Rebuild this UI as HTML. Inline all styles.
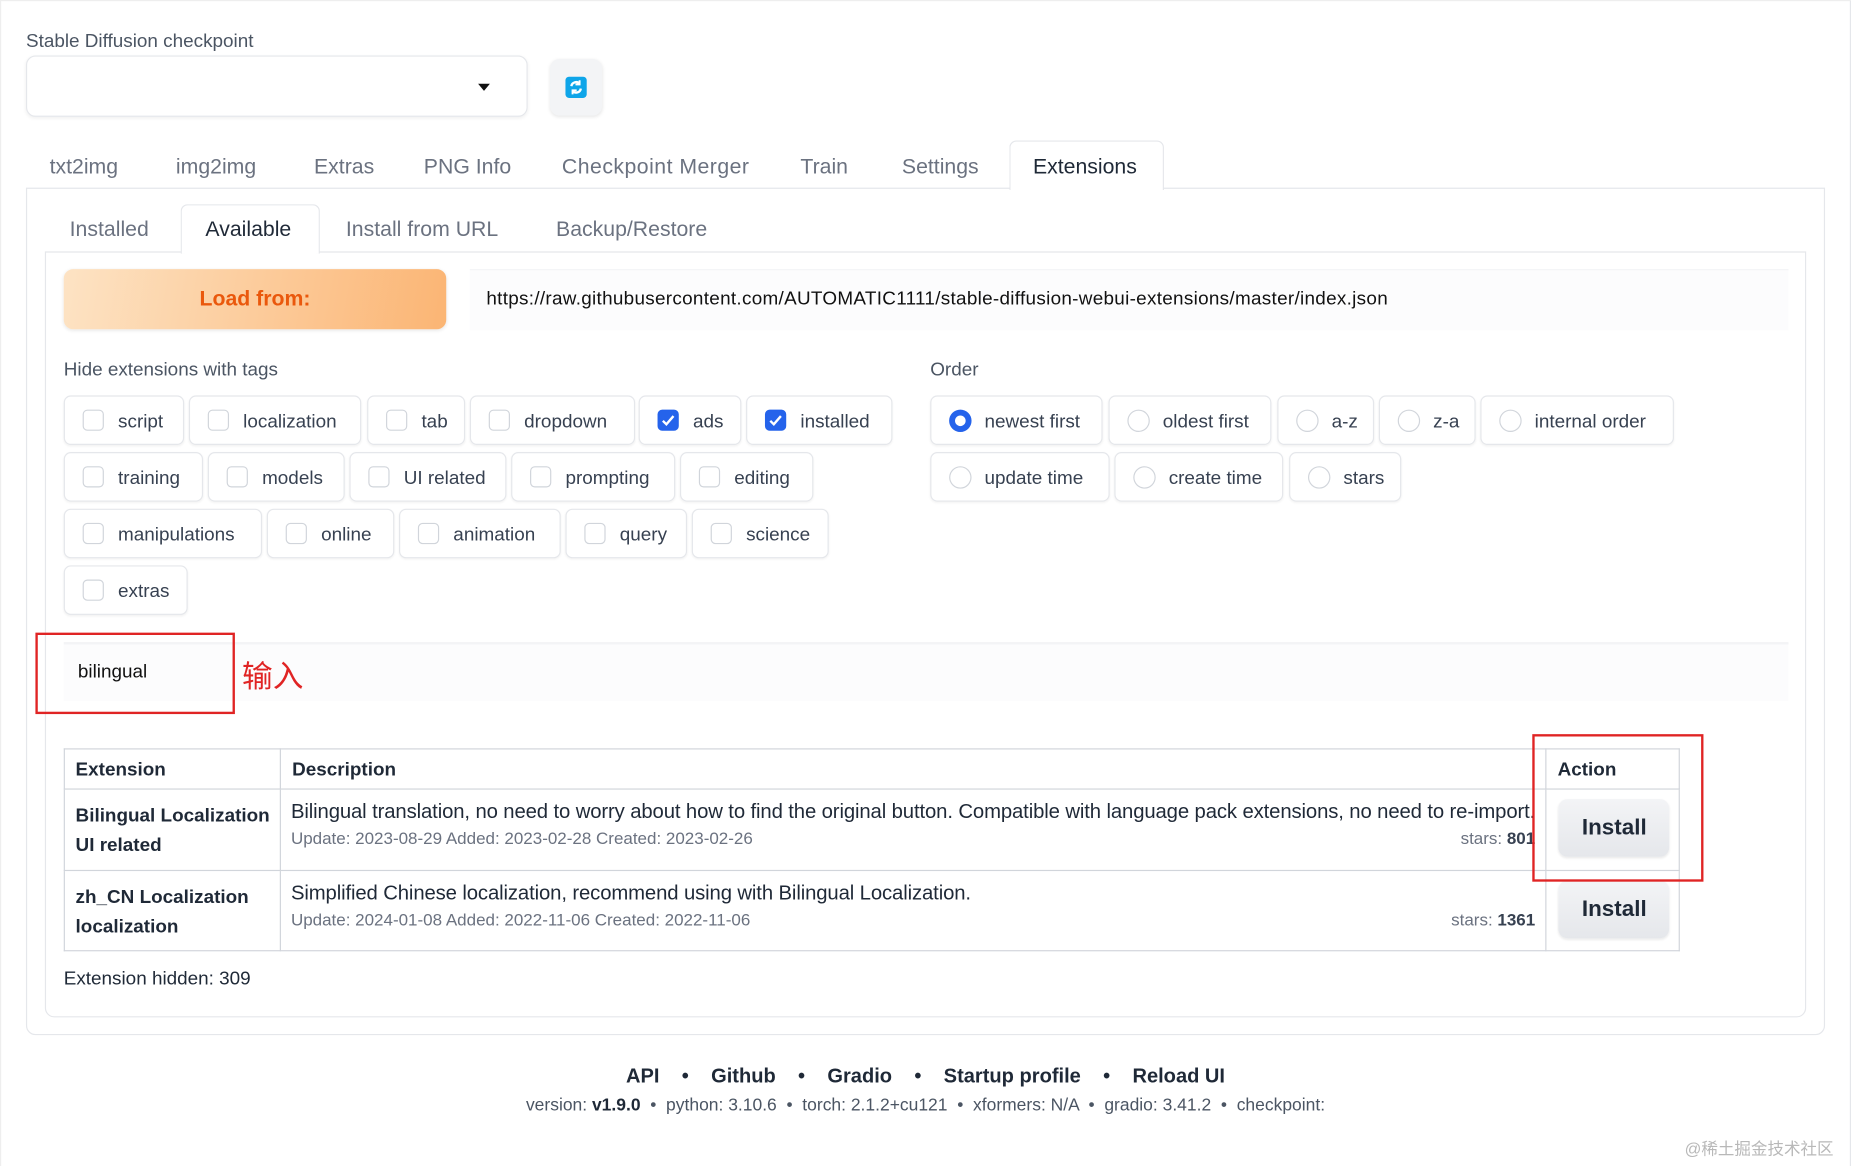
<!DOCTYPE html>
<html><head><meta charset="utf-8">
<style>
html,body{margin:0;padding:0;background:#fff;overflow:hidden;width:1851px;height:1165px}
#s{position:absolute;left:0;top:0;width:1568px;height:987px;transform:scale(1.1805,1.1803);transform-origin:0 0;font-family:"Liberation Sans","Noto Sans CJK SC",sans-serif;color:#1f2937}
.a{position:absolute;white-space:nowrap}
.t{font-size:18px;color:#6b7280;top:131px}
.st{font-size:18px;color:#6b7280;top:184px}
.chip{position:absolute;height:42px;border:1px solid #e5e7eb;border-radius:6px;background:#fff;box-shadow:0 1px 2px rgba(0,0,0,.05);font-size:16px;color:#374151;box-sizing:border-box}
.chip .b{position:absolute;left:15px;top:11px;width:18px;height:18px;border:1px solid #d1d5db;border-radius:4px;background:#fff;box-sizing:border-box}
.chip .b.c{background:#2563eb;border-color:#2563eb}
.chip .r{position:absolute;left:15px;top:11px;width:19px;height:19px;border:1px solid #d1d5db;border-radius:50%;box-sizing:border-box}
.chip .r.c{border:5px solid #2563eb}
.chip span{position:absolute;left:45px;top:13px}
td{border:1px solid #d1d5db;vertical-align:top;padding:0 9px;font-size:16px}
.inst{position:absolute;left:10px;width:94px;height:49px;border-radius:8px;background:linear-gradient(#f3f4f6,#e5e7eb);font-weight:bold;font-size:19px;text-align:center;line-height:49px;box-shadow:0 1px 2px rgba(0,0,0,.08)}
</style></head><body><div id="s">
<div class="a" style="left:0;top:0;width:1566px;height:987px;border-top:1px solid #eee;border-left:1px solid #eee;border-right:2px solid #e5e7eb"></div>
<div class="a" style="left:22px;top:27px;font-size:16px;color:#4b5563">Stable Diffusion checkpoint</div>
<div class="a" style="left:22px;top:47px;width:425px;height:52px;border:1px solid #e5e7eb;border-radius:8px;box-sizing:border-box;box-shadow:0 1px 3px rgba(0,0,0,.06)"></div>
<div class="a" style="left:405px;top:71px;width:0;height:0;border-left:5px solid transparent;border-right:5px solid transparent;border-top:6px solid #111"></div>
<div class="a" style="left:466px;top:50px;width:44px;height:48px;border-radius:8px;background:#f3f4f6;box-shadow:0 1px 3px rgba(0,0,0,.1)"></div>
<div class="a" style="left:479px;top:65px;width:18px;height:18px;border-radius:3px;background:#0ea5e9"><svg width="18" height="18" viewBox="0 0 18 18"><path d="M5 8a4 4 0 0 1 7-2M13 10a4 4 0 0 1-7 2" stroke="#fff" stroke-width="2" fill="none"/><path d="M12 3v3.5h-3.5M6 15v-3.5h3.5" stroke="#fff" stroke-width="1.6" fill="none"/></svg></div>

<div class="a t" style="left:42px">txt2img</div>
<div class="a t" style="left:149px">img2img</div>
<div class="a t" style="left:266px">Extras</div>
<div class="a t" style="left:359px">PNG Info</div>
<div class="a t" style="left:476px;letter-spacing:0.4px">Checkpoint Merger</div>
<div class="a t" style="left:678px">Train</div>
<div class="a t" style="left:764px">Settings</div>
<div class="a" style="left:22px;top:159px;width:1524px;height:718px;border:1px solid #e5e7eb;border-radius:0 0 8px 8px;box-sizing:border-box"></div>
<div class="a" style="left:855px;top:119px;width:131px;height:42px;border:1px solid #e5e7eb;border-bottom:none;border-radius:6px 6px 0 0;background:#fff;box-sizing:border-box"></div>
<div class="a t" style="left:875px;color:#1f2937">Extensions</div>

<div class="a" style="left:38px;top:213px;width:1492px;height:649px;border:1px solid #e5e7eb;border-radius:0 0 8px 8px;box-sizing:border-box"></div>
<div class="a" style="left:153px;top:173px;width:118px;height:42px;border:1px solid #e5e7eb;border-bottom:none;border-radius:6px 6px 0 0;background:#fff;box-sizing:border-box"></div>
<div class="a st" style="left:59px">Installed</div>
<div class="a st" style="left:174px;color:#1f2937">Available</div>
<div class="a st" style="left:293px">Install from URL</div>
<div class="a st" style="left:471px">Backup/Restore</div>

<div class="a" style="left:54px;top:228px;width:324px;height:51px;border-radius:8px;background:linear-gradient(100deg,#fde3c4,#fbb574);box-shadow:0 1px 3px rgba(0,0,0,.1);text-align:center;line-height:51px;font-size:18px;font-weight:bold;color:#ea580c">Load from:</div>
<div class="a" style="left:398px;top:228px;width:1117px;height:51px;background:#fcfcfd;border-top:1px solid #f3f4f6"></div>
<div class="a" style="left:412px;top:245px;font-size:16px;color:#111;letter-spacing:0.25px">https://raw.githubusercontent.com/AUTOMATIC1111/stable-diffusion-webui-extensions/master/index.json</div>

<div class="a" style="left:54px;top:305px;font-size:16px;color:#4b5563">Hide extensions with tags</div>
<div class="a" style="left:788px;top:305px;font-size:16px;color:#4b5563">Order</div>

<div class="chip" style="left:54px;top:335px;width:102px"><i class="b"></i><span>script</span></div>
<div class="chip" style="left:160px;top:335px;width:146px"><i class="b"></i><span>localization</span></div>
<div class="chip" style="left:311px;top:335px;width:83px"><i class="b"></i><span>tab</span></div>
<div class="chip" style="left:398px;top:335px;width:140px"><i class="b"></i><span>dropdown</span></div>
<div class="chip" style="left:541px;top:335px;width:87px"><i class="b c"><svg width="16" height="16" viewBox="0 0 16 16" style="display:block"><path d="M3.5 8.5l3 3 6-7" stroke="#fff" stroke-width="2" fill="none"/></svg></i><span>ads</span></div>
<div class="chip" style="left:632px;top:335px;width:124px"><i class="b c"><svg width="16" height="16" viewBox="0 0 16 16" style="display:block"><path d="M3.5 8.5l3 3 6-7" stroke="#fff" stroke-width="2" fill="none"/></svg></i><span>installed</span></div>

<div class="chip" style="left:54px;top:383px;width:118px"><i class="b"></i><span>training</span></div>
<div class="chip" style="left:176px;top:383px;width:116px"><i class="b"></i><span>models</span></div>
<div class="chip" style="left:296px;top:383px;width:133px"><i class="b"></i><span>UI related</span></div>
<div class="chip" style="left:433px;top:383px;width:139px"><i class="b"></i><span>prompting</span></div>
<div class="chip" style="left:576px;top:383px;width:113px"><i class="b"></i><span>editing</span></div>

<div class="chip" style="left:54px;top:431px;width:168px"><i class="b"></i><span>manipulations</span></div>
<div class="chip" style="left:226px;top:431px;width:108px"><i class="b"></i><span>online</span></div>
<div class="chip" style="left:338px;top:431px;width:137px"><i class="b"></i><span>animation</span></div>
<div class="chip" style="left:479px;top:431px;width:103px"><i class="b"></i><span>query</span></div>
<div class="chip" style="left:586px;top:431px;width:116px"><i class="b"></i><span>science</span></div>
<div class="chip" style="left:54px;top:479px;width:105px"><i class="b"></i><span>extras</span></div>

<div class="chip" style="left:788px;top:335px;width:146px"><i class="r c"></i><span>newest first</span></div>
<div class="chip" style="left:939px;top:335px;width:138px"><i class="r"></i><span>oldest first</span></div>
<div class="chip" style="left:1082px;top:335px;width:82px"><i class="r"></i><span>a-z</span></div>
<div class="chip" style="left:1168px;top:335px;width:82px"><i class="r"></i><span>z-a</span></div>
<div class="chip" style="left:1254px;top:335px;width:164px"><i class="r"></i><span>internal order</span></div>
<div class="chip" style="left:788px;top:383px;width:152px"><i class="r"></i><span>update time</span></div>
<div class="chip" style="left:944px;top:383px;width:143px"><i class="r"></i><span>create time</span></div>
<div class="chip" style="left:1092px;top:383px;width:95px"><i class="r"></i><span>stars</span></div>

<div class="a" style="left:54px;top:544px;width:1461px;height:48px;background:#fcfcfd;border-top:2px solid #f3f4f6"></div>
<div class="a" style="left:66px;top:561px;font-size:16px;color:#111">bilingual</div>
<div class="a" style="left:30px;top:536px;width:169px;height:69px;border:2px solid #e02424;box-sizing:border-box"></div>
<div class="a" style="left:205px;top:553px;font-size:26px;color:#e02424;font-family:'Noto Sans CJK SC',sans-serif">输入</div>

<table class="a" style="left:54px;top:634px;width:1369px;border-collapse:collapse;color:#1f2937">
<tr style="height:34px"><td style="width:163px;vertical-align:middle;font-weight:bold;padding-top:2px">Extension</td><td style="vertical-align:middle;font-weight:bold;padding-top:2px">Description</td><td style="width:96px;vertical-align:middle;font-weight:bold;padding-top:2px">Action</td></tr>
<tr style="height:69px"><td style="font-weight:bold;line-height:25px;padding-top:10px">Bilingual Localization<br>UI related</td><td style="position:relative;padding-top:8px;padding-left:8px"><div style="font-size:17.2px;letter-spacing:-0.1px">Bilingual translation, no need to worry about how to find the original button. Compatible with language pack extensions, no need to re-import.</div><div style="font-size:14.4px;color:#6b7280;margin-top:5px">Update: 2023-08-29 Added: 2023-02-28 Created: 2023-02-26<span style="float:right">stars: <b style="color:#374151">801</b></span></div></td><td style="position:relative"><div class="inst" style="top:8px">Install</div></td></tr>
<tr style="height:68px"><td style="font-weight:bold;line-height:25px;padding-top:10px">zh_CN Localization<br>localization</td><td style="padding-top:8px;padding-left:8px"><div style="font-size:17.2px;letter-spacing:-0.1px">Simplified Chinese localization, recommend using with Bilingual Localization.</div><div style="font-size:14.4px;color:#6b7280;margin-top:5px">Update: 2024-01-08 Added: 2022-11-06 Created: 2022-11-06<span style="float:right">stars: <b style="color:#374151">1361</b></span></div></td><td style="position:relative"><div class="inst" style="top:8px">Install</div></td></tr>
</table>
<div class="a" style="left:1298px;top:622px;width:145px;height:125px;border:2px solid #e02424;box-sizing:border-box"></div>
<div class="a" style="left:54px;top:821px;font-size:16px;color:#1f2937">Extension hidden: 309</div>

<div class="a" style="left:0;width:1568px;top:902px;text-align:center;font-size:17px;font-weight:bold;color:#1f2937">API &nbsp;&nbsp;&nbsp;•&nbsp;&nbsp;&nbsp; Github &nbsp;&nbsp;&nbsp;•&nbsp;&nbsp;&nbsp; Gradio &nbsp;&nbsp;&nbsp;•&nbsp;&nbsp;&nbsp; Startup profile &nbsp;&nbsp;&nbsp;•&nbsp;&nbsp;&nbsp; Reload UI</div>
<div class="a" style="left:0;width:1568px;top:929px;text-align:center;font-size:14.8px;color:#4b5563">version: <b style="color:#1f2937">v1.9.0</b> &nbsp;•&nbsp; python: 3.10.6 &nbsp;•&nbsp; torch: 2.1.2+cu121 &nbsp;•&nbsp; xformers: N/A &nbsp;•&nbsp; gradio: 3.41.2 &nbsp;•&nbsp; checkpoint: </div>
<div class="a" style="left:1427px;top:963px;font-size:14px;color:#b8b8b8">@稀土掘金技术社区</div>
</div></body></html>
